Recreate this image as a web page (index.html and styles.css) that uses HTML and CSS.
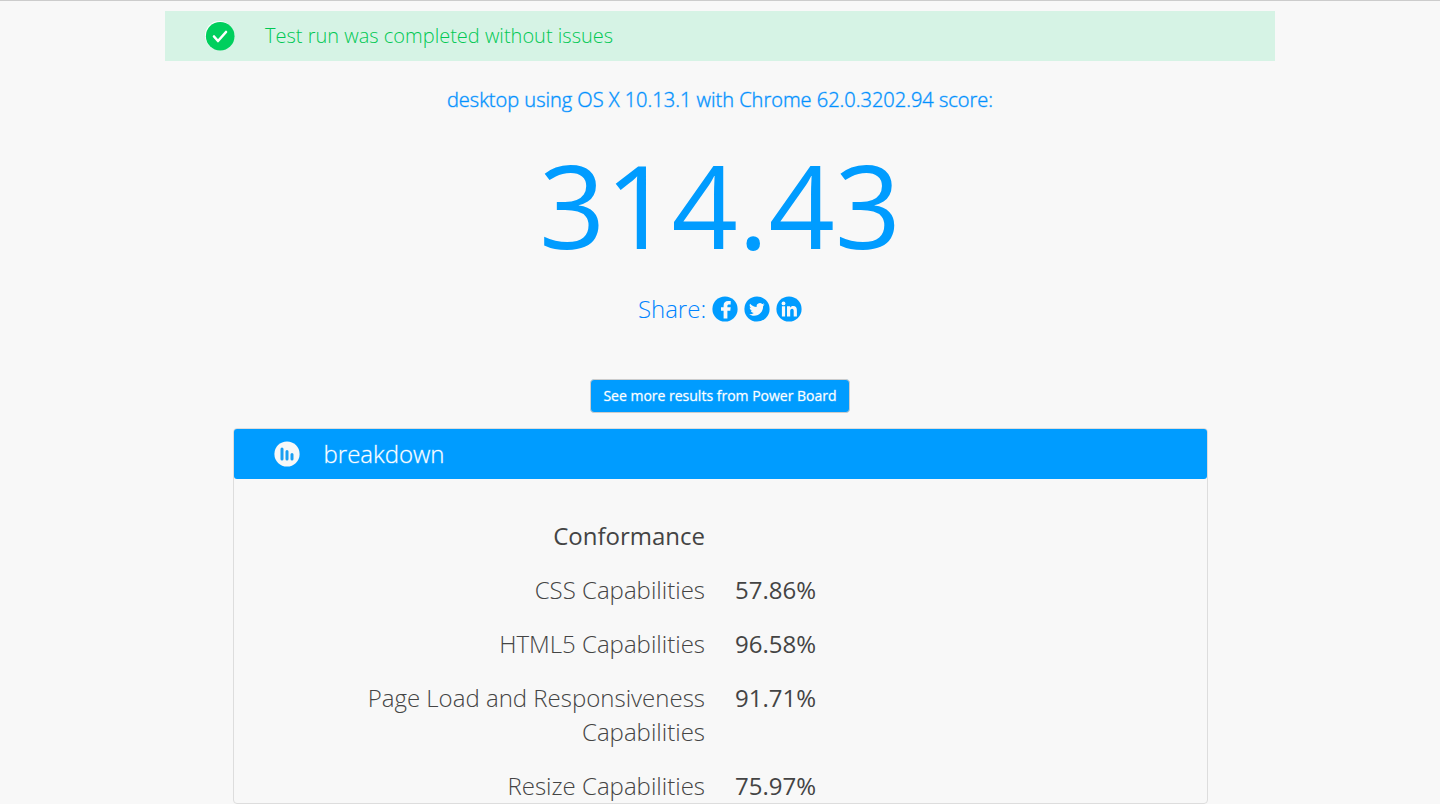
FILE: index.html
```html
<!doctype html>
<html lang="en">
<head>
    <meta charset="UTF-8">
    <meta name="viewport" content="width=device-width, initial-scale=1">
    <title>Test results</title>
    <link rel="stylesheet" href="styles.css">
</head>
<body>
    <main class="container">
        <div class="status" role="status">
            <svg class="status-icon" viewBox="0 0 30 30" aria-hidden="true">
                <circle cx="14.5" cy="14.5" r="14.5" fill="#fff"/>
                <circle cx="15.2" cy="15.2" r="14.3" fill="#00cf5d"/>
                <path d="M9 15.5l4 4.5 8-9" fill="none" stroke="#fff" stroke-width="2.6" stroke-linecap="round" stroke-linejoin="round"/>
            </svg>
            <span>Test run was completed without issues</span>
        </div>

        <h1 class="device">desktop using OS X 10.13.1 with Chrome 62.0.3202.94 score:</h1>
        <div class="score">314.43</div>

        <div class="share">
            <span>Share:</span>
            <a href="#" aria-label="Facebook">
                <svg viewBox="0 0 26 26">
                    <circle cx="13" cy="13" r="12.6" fill="#009cff"/>
                    <path d="M11.600 22.600V14.800H9v-3.500h2.600V9.500c0-3 1.700-4.600 4.500-4.600h2.600v3.500h-1.600c-1.300 0-1.700.5-1.700 1.500v1.400h3.300l-.4 3.500h-2.900v7.800z" fill="#f8f8f8"/>
                </svg>
            </a>
            <a href="#" aria-label="Twitter">
                <svg viewBox="0 0 26 26">
                    <circle cx="13" cy="13" r="12.6" fill="#009cff"/>
                    <path d="M20.6 8.5c-.6.3-1.200.4-1.800.5.7-.4 1.200-1 1.400-1.700-.6.4-1.300.6-2 .8a3.200 3.200 0 0 0-5.500 2.900c-2.700-.1-5-1.400-6.600-3.300-.9 1.500-.4 3.300 1 4.200-.5 0-1-.1-1.400-.4 0 1.600 1.100 2.900 2.500 3.200-.5.1-1 .1-1.400 0 .4 1.300 1.600 2.200 3 2.200a6.500 6.500 0 0 1-4.700 1.300c1.400.9 3.100 1.500 4.900 1.500 6 0 9.300-5 9.100-9.600.6-.4 1.100-1 1.500-1.600z" fill="#f8f8f8"/>
                </svg>
            </a>
            <a href="#" aria-label="LinkedIn">
                <svg viewBox="0 0 26 26">
                    <circle cx="13" cy="13" r="12.6" fill="#009cff"/>
                    <circle cx="7.500" cy="7.400" r="1.900" fill="#f8f8f8"/>
                    <path d="M5.900 10.300h3.200v10.300H5.900zM11 10.300h3.100v1.400c.6-1 1.700-1.700 3.100-1.700 2.800 0 3.700 1.700 3.700 4.500v6.100h-3.200v-5.500c0-1.400-.3-2.400-1.600-2.400-1.400 0-1.900 1-1.900 2.400v5.500H11z" fill="#f8f8f8"/>
                </svg>
            </a>
        </div>

        <button class="btn" type="button">See more results from Power Board</button>

        <section class="panel">
            <h2 class="panel-heading">
                <svg viewBox="0 0 26 26" aria-hidden="true">
                    <circle cx="13" cy="13" r="12.6" fill="#f8f8f8"/>
                    <path d="M8 8v10M13 10.600v7.400M18 13.400v4.600" fill="none" stroke="#1a9ff2" stroke-width="3" stroke-linecap="round"/>
                </svg>
                <span>breakdown</span>
            </h2>
            <table class="results">
                <tbody>
                    <tr>
                        <th class="group" scope="rowgroup">Conformance</th>
                        <td></td>
                    </tr>
                    <tr>
                        <th scope="row">CSS Capabilities</th>
                        <td>57.86%</td>
                    </tr>
                    <tr>
                        <th scope="row">HTML5 Capabilities</th>
                        <td>96.58%</td>
                    </tr>
                    <tr>
                        <th scope="row">Page Load and Responsiveness Capabilities</th>
                        <td>91.71%</td>
                    </tr>
                    <tr>
                        <th scope="row">Resize Capabilities</th>
                        <td>75.97%</td>
                    </tr>
                </tbody>
            </table>
        </section>
    </main>
</body>
</html>
```
FILE: styles.css
```css
* {
    box-sizing: border-box;
}
body {
    margin: 0;
    border-top: 1px solid #ccc;
    background-color: #f8f8f8;
    color: #444;
    font-family: 'Open Sans', sans-serif;
    font-size: 24px;
    font-weight: 300;
    line-height: 34px;
}
.container {
    display: flex;
    flex-direction: column;
    align-items: center;
    max-width: 1140px;
    margin: 0 auto;
    padding: 10px 15px 0;
    color: #0084ff;
}
.status {
    display: flex;
    align-items: center;
    gap: 30px;
    width: 100%;
    min-height: 50px;
    padding: 0 40px;
    background-color: #d6f3e5;
    color: #00c853;
    font-size: 20px;
}
.status-icon {
    width: 30px;
    height: 30px;
}
.device {
    margin: 22px 0 0;
    color: #0090ff;
    font-size: 20px;
    font-weight: 300;
    text-align: center;
    -webkit-text-stroke: 1px rgba(0, 144, 255, 0.4);
}
.score {
    margin: 23px 0 24px;
    color: #009cff;
    font-size: 116px;
    font-weight: 400;
    line-height: 128px;
}
.share {
    display: flex;
    align-items: center;
    gap: 6px;
}
.share svg,
.panel-heading svg {
    display: block;
    width: 26px;
    height: 26px;
}
.btn {
    margin: 53px 0 15px;
    padding: 6px 12px;
    border: 1px solid #ccc;
    border-radius: 4px;
    background-color: #009cff;
    color: #fff;
    font-family: inherit;
    font-size: 14px;
    font-weight: 500;
    line-height: 20px;
    cursor: pointer;
    -webkit-text-stroke: 1px rgba(255, 255, 255, 0.3);
}
.btn:hover {
    background-color: #0088e0;
}
.panel {
    width: 100%;
    max-width: 975px;
    border: 1px solid #ddd;
    border-radius: 4px;
    color: #444;
}
.panel-heading {
    display: flex;
    align-items: center;
    gap: 24px;
    height: 50px;
    margin: 0;
    padding: 0 40px;
    border-radius: 3px;
    background-color: #009cff;
    color: #fff;
    font-size: 24px;
    font-weight: 300;
    -webkit-text-stroke: 1px rgba(255, 255, 255, 0.3);
}
.results {
    width: 100%;
    margin-top: 30px;
    border-collapse: collapse;
    table-layout: fixed;
}
.results th,
.results td {
    padding: 10px 15px;
    vertical-align: top;
}
.results th {
    padding-left: 120px;
    font-weight: 300;
    text-align: right;
}
.results .group,
.results td {
    font-weight: 400;
}
.results tr:last-child > * {
    padding-bottom: 0;
}
```
